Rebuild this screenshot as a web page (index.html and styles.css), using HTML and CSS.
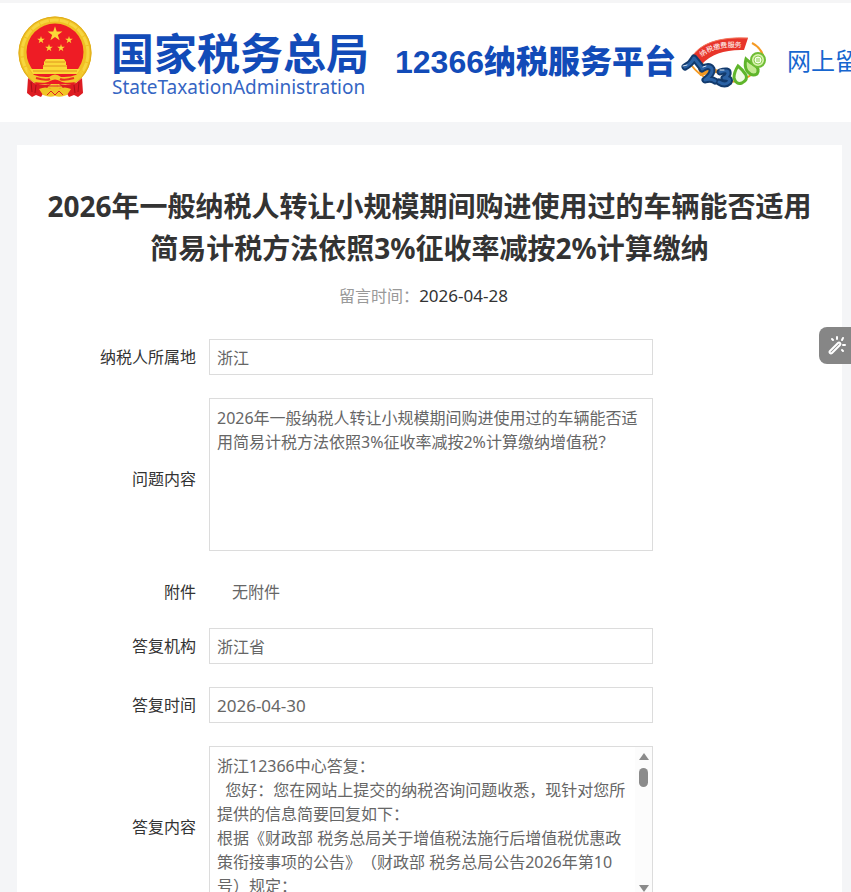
FILE: index.html
```html
<!DOCTYPE html>
<html lang="zh-CN">
<head>
<meta charset="utf-8">
<meta name="viewport" content="width=device-width, initial-scale=1">
<title>12366纳税服务平台</title>
<link rel="stylesheet" href="styles.css">
</head>
<body>
<header class="site-header">
  <svg class="emblem" viewBox="0 0 82 92" aria-hidden="true">
    <defs>
      <polygon id="star" points="0,-10 2.25,-3.09 9.51,-3.09 3.63,1.18 5.88,8.09 0,3.82 -5.88,8.09 -3.63,1.18 -9.51,-3.09 -2.25,-3.09"/>
    </defs>
    <circle cx="41" cy="42" r="36.5" fill="#f0c024"/>
    <circle cx="41" cy="42" r="33" fill="none" stroke="#f7d63f" stroke-width="3" stroke-dasharray="9 1"/>
    <circle cx="41" cy="42" r="36" fill="none" stroke="#e0ae1c" stroke-width="1"/>
    <circle cx="41" cy="41" r="28.5" fill="#ee1c25"/>
    <g fill="#fbd938">
      <use href="#star" transform="translate(41 23) scale(.78)"/>
      <use href="#star" transform="translate(27 29) scale(.4)"/>
      <use href="#star" transform="translate(55 29) scale(.4)"/>
      <use href="#star" transform="translate(35 37) scale(.4)"/>
      <use href="#star" transform="translate(47 37) scale(.4)"/>
      <path d="M32 48h18l2 3v4H30v-4z"/>
      <path d="M29 54h24v4h13l-3 5H19l-3-5h13z"/>
    </g>
    <path d="M31 51h20M29 55h24M19 60h44" stroke="#e0961e" stroke-width="1"/>
    <path d="M17 63h48l-5 10H22z" fill="#ee1c25"/>
    <path d="M13 57q5 10 22 9 6-5 12 0 17 1 22-9l-1 8-6 6q-12 2-16-1-5-3-10 0-4 3-16 1l-6-6z" fill="#f3c82b"/>
    <path d="M22 67q10 3 14 1M60 67q-10 3-14 1" fill="none" stroke="#e8321e" stroke-width="2"/>
    <path d="M14 67l6 5q10 3 17 1l-5 5-5 8-5-2-4 2-5-4z" fill="#dd1c22"/>
    <path d="M68 67l-6 5q-10 3-17 1l5 5 5 8 5-2 4 2 5-4z" fill="#dd1c22"/>
    <path d="M25 78q7-3 11 0 5-5 10 0 4-3 11 0l-4 6q-7 3-12 1-5 2-12-1z" fill="#f1c526"/>
    <path d="M33 84l4-4 4 4 4-4 4 4M35 75h12" fill="none" stroke="#dd2020" stroke-width="1"/>
    <path d="M17 71l1 10M22 74l-1 8M65 71l-1 10M60 74l1 8" stroke="#a90f17" stroke-width="1"/>
  </svg>
  <div class="agency">
    <span class="agency-name">国家税务总局</span>
    <span class="agency-en">StateTaxationAdministration</span>
  </div>
  <span class="platform"><span class="platform-number">12366</span>纳税服务平台</span>
  <svg class="mark" viewBox="0 0 92 58" role="img" aria-label="12360 纳税缴费服务">
    <path d="M14 34Q28 52 52 50T82 30M74 11Q84 16 86 27" fill="none" stroke="#f59a23" stroke-width="2"/>
    <path d="M18 27l10 6 22 9-14-1-14 3z" fill="#f59a23"/>
    <path d="M13 26Q26 4 70 6l-4 12Q38 17 24 32z" fill="#e8352a"/>
    <path d="M13 26Q26 4 70 6" fill="none" stroke="#f2785f" stroke-width="1"/>
    <path id="banner-line" d="M24 25Q36 13 68 16" fill="none"/>
    <text class="mark-banner"><textPath href="#banner-line">纳税缴费服务</textPath></text>
    <g fill="none" stroke-linecap="round" stroke-linejoin="round">
      <g stroke="#123a6d" stroke-width="7">
        <path d="M7 35q6-3 9-9l8 10"/>
        <path d="M24 37q7-5 10 0 1 5-7 11 6-2 10 1"/>
        <path d="M42 40q9-3 8 2-1 3-4 4 7 0 5 4-4 4-10 0"/>
      </g>
      <g stroke="#2b62a5" stroke-width="3">
        <path d="M7 35q6-3 9-9l8 10"/>
        <path d="M24 37q7-5 10 0 1 5-7 11 6-2 10 1"/>
        <path d="M42 40q9-3 8 2-1 3-4 4 7 0 5 4-4 4-10 0"/>
      </g>
      <path d="M5 34l4-1M25 35l3-1M42 38l4 0" stroke="#dbe9f7" stroke-width="1"/>
    </g>
    <path d="M60 34q-4 6-4 12 2 7 8 5 6-3 4-8-3-5-8-9z" fill="#f1fbe6" stroke="#5fb52b" stroke-width="3"/>
    <path d="M68 27q-2 7 1 12 5 6 10 3 3-5-2-9-5-2-9-6z" fill="#c4ea92" stroke="#5fb52b" stroke-width="3"/>
    <circle cx="80" cy="28" r="7" fill="#d9f3ae" stroke="#6fbd35" stroke-width="2"/>
    <circle cx="80" cy="28" r="4" fill="#f6ffe9" stroke="#8ccd50" stroke-width="1"/>
    <path d="M78 27h4M78 29h4" stroke="#8ccd50" stroke-width="1"/>
  </svg>
  <a class="nav-link" href="#">网上留言</a>
</header>

<main class="card">
  <h1 class="title">2026年一般纳税人转让小规模期间购进使用过的车辆能否适用简易计税方法依照3%征收率减按2%计算缴纳</h1>
  <p class="meta">留言时间：<time class="meta-date" datetime="2026-04-28">2026-04-28</time></p>

  <form class="form">
    <div class="row">
      <label class="label" for="region">纳税人所属地</label>
      <input class="field" id="region" type="text" value="浙江" readonly>
    </div>
    <div class="row">
      <label class="label label-area" for="question">问题内容</label>
      <textarea class="field field-area" id="question" readonly>2026年一般纳税人转让小规模期间购进使用过的车辆能否适用简易计税方法依照3%征收率减按2%计算缴纳增值税？</textarea>
    </div>
    <div class="row row-plain">
      <span class="label">附件</span>
      <span class="plain">无附件</span>
    </div>
    <div class="row">
      <label class="label" for="office">答复机构</label>
      <input class="field" id="office" type="text" value="浙江省" readonly>
    </div>
    <div class="row">
      <label class="label" for="reply-date">答复时间</label>
      <input class="field field-date" id="reply-date" type="text" value="2026-04-30" readonly>
    </div>
    <div class="row">
      <label class="label label-area" for="reply">答复内容</label>
      <div class="scroll-box">
        <textarea class="field field-area field-scroll" id="reply" readonly>浙江12366中心答复：
  您好：您在网站上提交的纳税咨询问题收悉，现针对您所提供的信息简要回复如下：
根据《财政部 税务总局关于增值税法施行后增值税优惠政策衔接事项的公告》（财政部 税务总局公告2026年第10号）规定：</textarea>
        <div class="scrollbar" aria-hidden="true">
          <svg class="arrow" viewBox="0 0 10 8"><path d="M5 0l5 7H0z"/></svg>
          <span class="thumb"></span>
          <svg class="arrow arrow-down" viewBox="0 0 10 8"><path d="M5 8l5-7H0z"/></svg>
        </div>
      </div>
    </div>
  </form>
</main>

<button class="assistant" type="button" aria-label="智能工具">
  <svg class="assistant-icon" viewBox="0 0 20 20" fill="none" stroke="#fff" stroke-width="2" stroke-linecap="round">
    <path d="M3 15l8-8q1-1 2 0t0 2l-8 8q-1 1-2 0t0-2z"/>
    <path d="M10 1v2M5 3l1 1M15 4l1-2M16 9h2M15 14l1 1" />
  </svg>
</button>
</body>
</html>
```
FILE: styles.css
```css
* {
  box-sizing: border-box;
}

html {
  scrollbar-width: none;
}

body {
  margin: 0;
  overflow-x: hidden;
  background: #f4f5f7;
  color: #333;
  font: 16px/24px "Noto Sans", "Noto Sans CJK SC", sans-serif;
  text-spacing-trim: space-all;
}

.site-header {
  display: flex;
  align-items: center;
  height: 122px;
  padding: 0 0 12px 14px;
  border-top: 3px solid #f5f5f6;
  background: #fff;
  white-space: nowrap;
}

.site-header > * {
  flex: none;
}

.emblem {
  width: 82px;
  height: 92px;
}

.agency {
  display: flex;
  flex-direction: column;
  margin-left: 15px;
  padding-top: 18px;
  color: #124bb8;
}

.agency-name {
  font-size: 43px;
  font-weight: 700;
  line-height: 42px;
}

.agency-en {
  padding-left: 1px;
  color: #3565c3;
  font-size: 19px;
  line-height: 24px;
}

.platform {
  margin-left: 26px;
  padding-top: 10px;
  color: #124bb8;
  font-size: 32px;
  font-weight: 900;
  line-height: 40px;
}

.platform-number {
  font-family: "Liberation Sans", Arial, sans-serif;
}

.mark {
  width: 92px;
  height: 58px;
  margin: 8px 0 0 2px;
}

.mark-banner {
  fill: #fff;
  font-size: 7px;
}

.nav-link {
  margin-left: 17px;
  padding-top: 8px;
  color: #1766cf;
  font-size: 24px;
  line-height: 32px;
  text-decoration: none;
}

.card {
  margin: 23px 9px 0 17px;
  padding: 40px 24px 60px;
  background: #fff;
}

.title {
  margin: 0;
  font-size: 28px;
  line-height: 42px;
  text-align: center;
}

.meta {
  margin: 15px 0 31px;
  padding-right: 12px;
  color: #999;
  text-align: center;
}

.meta-date {
  color: #333;
  font-size: 17px;
}

.form {
  display: flex;
  flex-direction: column;
  gap: 23px;
  padding: 0 165px 0 40px;
}

.row {
  display: flex;
  align-items: center;
  min-height: 36px;
}

.row-plain {
  margin-bottom: -5px;
}

.label {
  flex: none;
  width: 115px;
  margin-right: 13px;
  text-align: right;
}

.label-area {
  padding-top: 8px;
}

.field {
  display: block;
  flex: 1;
  width: 100%;
  min-width: 0;
  height: 36px;
  margin: 0;
  padding: 0 7px;
  border: 1px solid #dcdcdc;
  border-radius: 0;
  outline: none;
  background: #fff;
  color: #666;
  font: inherit;
  text-spacing-trim: inherit;
}

.field-date {
  font-size: 17px;
}

.field-area {
  height: 153px;
  padding: 7px;
  overflow: hidden;
  resize: none;
}

.field-scroll {
  padding-right: 20px;
}

.plain {
  margin-left: 23px;
  color: #666;
}

.scroll-box {
  position: relative;
  flex: 1;
  min-width: 0;
}

.scrollbar {
  position: absolute;
  top: 1px;
  right: 1px;
  bottom: 1px;
  display: flex;
  flex-direction: column;
  align-items: center;
  width: 17px;
  padding: 6px 0;
  background: #fcfcfc;
}

.arrow {
  width: 10px;
  height: 8px;
  fill: #8b8b8b;
}

.arrow-down {
  margin-top: auto;
}

.thumb {
  width: 9px;
  height: 19px;
  margin-top: 7px;
  border-radius: 5px;
  background: #8b8b8b;
}

.assistant {
  position: fixed;
  top: 327px;
  right: 0;
  display: flex;
  align-items: center;
  width: 32px;
  height: 37px;
  padding: 0 0 0 8px;
  border: 0;
  border-radius: 8px 0 0 8px;
  background: #868686;
}

.assistant-icon {
  flex: none;
  width: 20px;
  height: 20px;
}
```
